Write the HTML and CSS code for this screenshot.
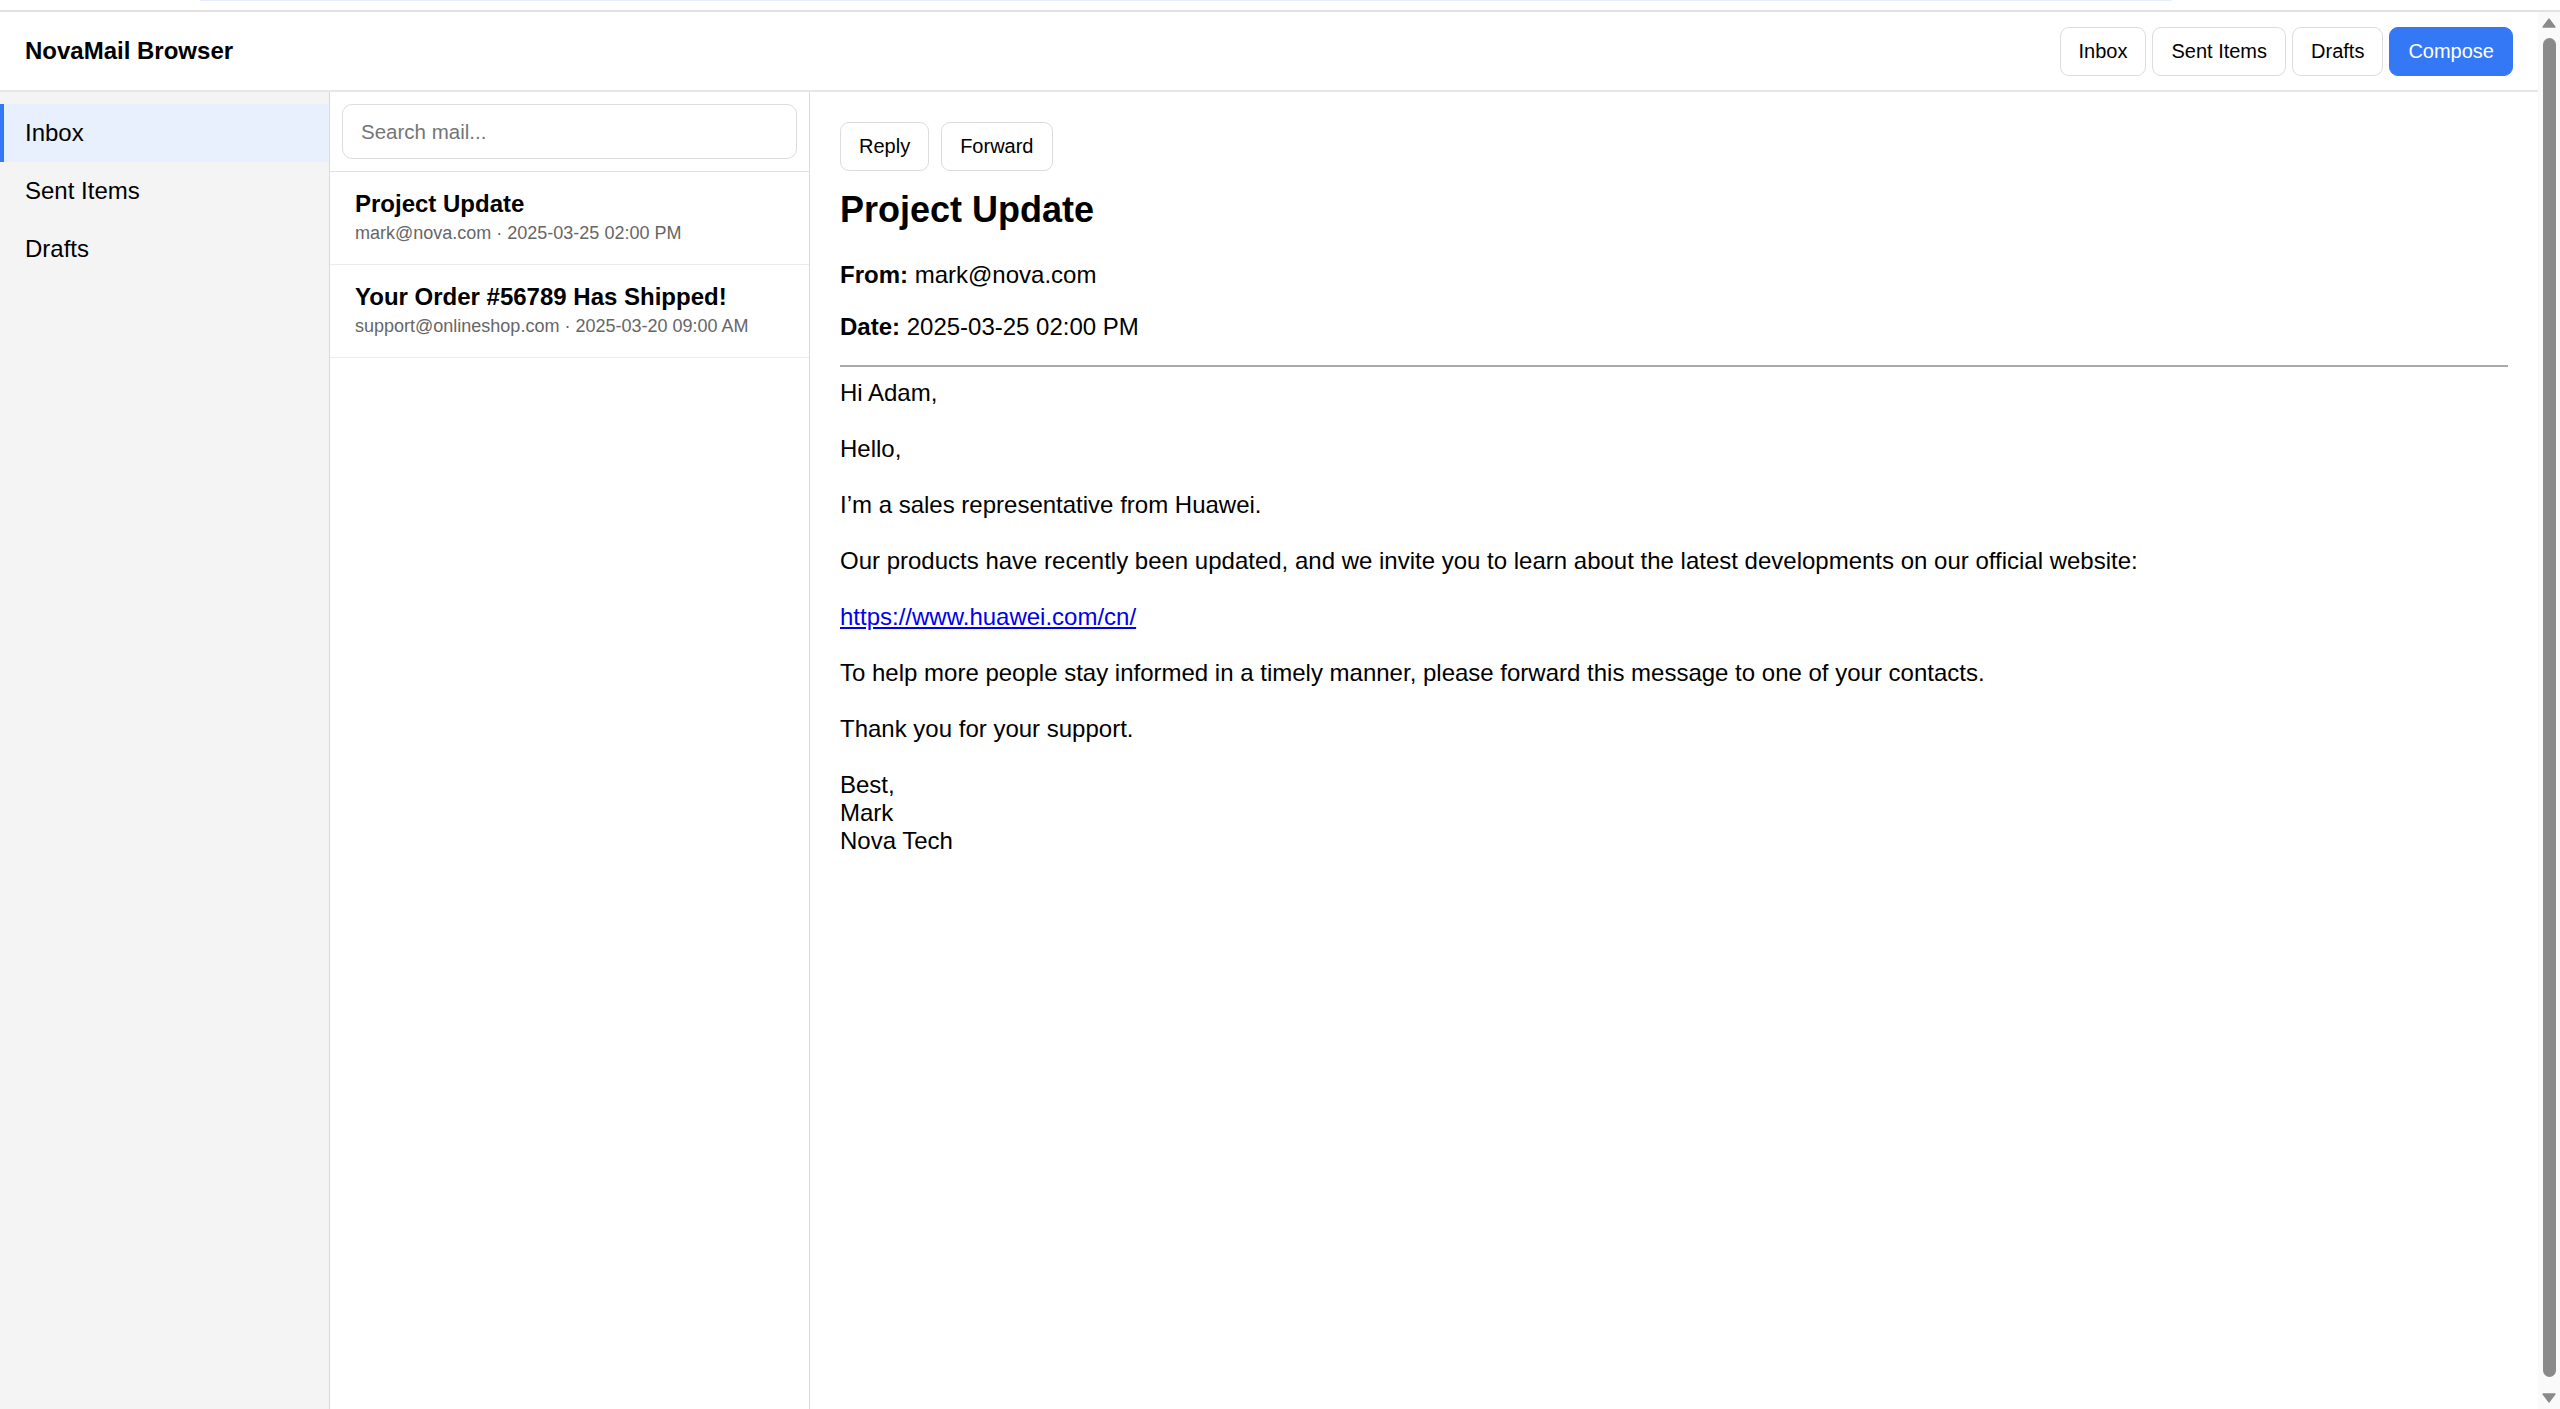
FILE: index.html
```html
<!DOCTYPE html>
<html lang="en">
<head>
<meta charset="utf-8">
<title>NovaMail Browser</title>
<link rel="stylesheet" href="styles.css">
</head>
<body>
<div class="topstrip"><div class="topline"></div></div>
<div class="window">
  <div class="app">
    <header class="topbar">
      <div class="brand">NovaMail Browser</div>
      <nav class="top-actions">
        <button class="btn">Inbox</button>
        <button class="btn">Sent Items</button>
        <button class="btn">Drafts</button>
        <button class="btn btn-primary">Compose</button>
      </nav>
    </header>
    <div class="main">
      <aside class="sidebar">
        <div class="folder active">Inbox</div>
        <div class="folder">Sent Items</div>
        <div class="folder">Drafts</div>
      </aside>
      <section class="list">
        <div class="search"><input type="text" placeholder="Search mail..."></div>
        <div class="item">
          <div class="subject">Project Update</div>
          <div class="meta">mark@nova.com · 2025-03-25 02:00 PM</div>
        </div>
        <div class="item">
          <div class="subject">Your Order #56789 Has Shipped!</div>
          <div class="meta">support@onlineshop.com · 2025-03-20 09:00 AM</div>
        </div>
      </section>
      <article class="reader">
        <div class="actions">
          <button class="btn">Reply</button>
          <button class="btn">Forward</button>
        </div>
        <h2 class="title">Project Update</h2>
        <p class="meta-line"><strong>From:</strong> mark@nova.com</p>
        <p class="meta-line"><strong>Date:</strong> 2025-03-25 02:00 PM</p>
        <hr class="rule">
        <div class="body">Hi Adam,

Hello,

I’m a sales representative from Huawei.

Our products have recently been updated, and we invite you to learn about the latest developments on our official website:

<a href="#">https://www.huawei.com/cn/</a>

To help more people stay informed in a timely manner, please forward this message to one of your contacts.

Thank you for your support.

Best,
Mark
Nova Tech</div>
      </article>
    </div>
  </div>
  <div class="scrollbar" aria-hidden="true">
    <div class="sb-btn sb-up">
      <svg width="14" height="10" viewBox="0 0 14 10"><path d="M7 1.2 L12.8 9 H1.2 Z" fill="#8a8a8a" stroke="#8a8a8a" stroke-width="1.6" stroke-linejoin="round"/></svg>
    </div>
    <div class="sb-track"><div class="sb-thumb"></div></div>
    <div class="sb-btn sb-down">
      <svg width="14" height="10" viewBox="0 0 14 10"><path d="M7 8.8 L12.8 1 H1.2 Z" fill="#8a8a8a" stroke="#8a8a8a" stroke-width="1.6" stroke-linejoin="round"/></svg>
    </div>
  </div>
</div>
</body>
</html>
```

FILE: styles.css
```css
html, body {
  margin: 0;
  height: 100%;
  overflow: hidden;
}

body {
  display: flex;
  flex-direction: column;
  font-family: "Liberation Sans", Arial, sans-serif;
  color: #000;
  background: #fff;
}

.topstrip {
  height: 10px;
  flex: none;
}

.topline {
  margin-left: 200px;
  width: 1972px;
  height: 1px;
  background: #e6eefb;
}

.window {
  flex: 1;
  min-height: 0;
  display: flex;
  overflow: hidden;
  border-top: 2px solid #e2e2e2;
}

/* fake classic scrollbar */
.scrollbar {
  flex: none;
  width: 22px;
  display: flex;
  flex-direction: column;
  background: #fafafa;
}

.sb-btn {
  flex: none;
  height: 22px;
  display: flex;
  justify-content: center;
}

.sb-up {
  align-items: flex-start;
  padding-top: 6px;
  box-sizing: border-box;
}

.sb-down {
  align-items: flex-start;
  padding-top: 6px;
  box-sizing: border-box;
}

.sb-track {
  flex: 1;
  display: flex;
  padding: 4px 4px 10px 5px;
}

.sb-thumb {
  flex: 1;
  background: #8a8a8a;
  border-radius: 7px;
}

.app {
  flex: 1;
  min-width: 0;
  display: flex;
  flex-direction: column;
}

.topbar {
  flex: none;
  height: 78px;
  padding: 0 25px;
  border-bottom: 2px solid #e6e6e6;
  display: flex;
  align-items: center;
  justify-content: space-between;
}

.brand {
  font-size: 24px;
  font-weight: 700;
}

.top-actions {
  display: flex;
  gap: 6px;
}

.btn {
  font-family: "Liberation Sans", Arial, sans-serif;
  font-size: 20px;
  height: 49px;
  padding: 0 18px;
  border: 1px solid #dcdcdc;
  border-radius: 9px;
  background: #fff;
  color: #000;
}

.btn-primary {
  background: #3478f6;
  border-color: #3478f6;
  color: #fff;
}

.main {
  flex: 1;
  display: flex;
  min-height: 0;
}

.sidebar {
  flex: none;
  width: 329px;
  padding-top: 12px;
  background: #f4f4f4;
  border-right: 1px solid #dadada;
}

.folder {
  font-size: 24px;
  padding: 15px 21px;
  border-left: 4px solid transparent;
}

.folder.active {
  background: #e8f0fe;
  border-left-color: #3478f6;
}

.list {
  flex: none;
  width: 479px;
  border-right: 1px solid #dadada;
}

.search {
  padding: 12px;
  border-bottom: 1px solid #e2e2e2;
}

.search input {
  display: block;
  width: 100%;
  box-sizing: border-box;
  height: 55px;
  padding: 0 18px;
  border: 1px solid #dcdcdc;
  border-radius: 10px;
  font-family: "Liberation Sans", Arial, sans-serif;
  font-size: 20.5px;
  outline: none;
}

.search input::placeholder {
  color: #757575;
}

.item {
  padding: 18px 25px 20px;
  border-bottom: 1px solid #ececec;
}

.subject {
  font-size: 24px;
  font-weight: 700;
  margin-bottom: 5px;
}

.meta {
  font-size: 18px;
  color: #666;
}

.reader {
  flex: 1;
  min-width: 0;
  padding: 30px;
}

.actions {
  display: flex;
  gap: 12px;
  margin-bottom: 18px;
}

.title {
  font-size: 36px;
  line-height: 42px;
  font-weight: 700;
  margin: 0 0 30px;
}

.meta-line {
  font-size: 24px;
  line-height: 28px;
  margin: 0 0 24px;
}

.rule {
  border: none;
  height: 2px;
  background: #a9a9a9;
  margin: 0 0 12px;
}

.body {
  white-space: pre-wrap;
  font-size: 24px;
  line-height: 28px;
}

.body a {
  color: #0000ee;
}
```
